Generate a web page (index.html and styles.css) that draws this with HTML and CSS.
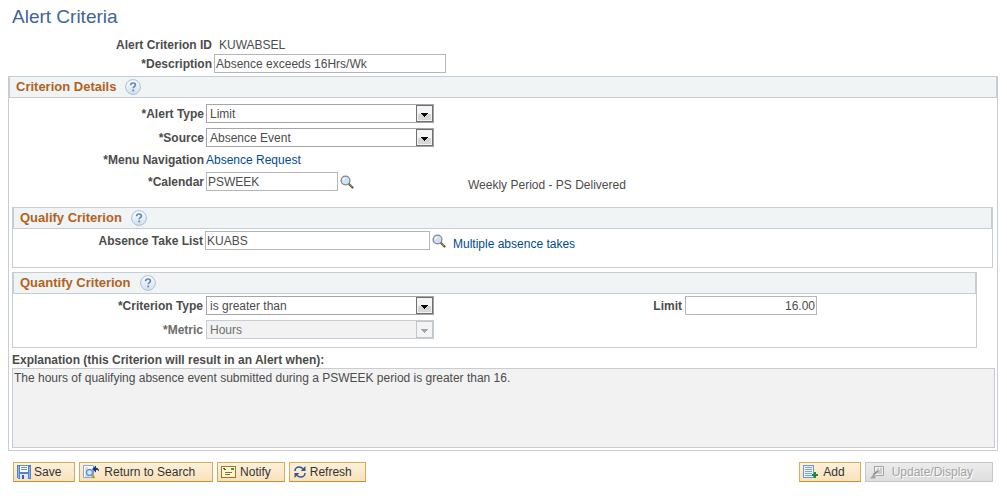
FILE: index.html
```
<!DOCTYPE html>
<html lang="en">
<head>
	<meta charset="utf-8">
	<title>Alert Criteria</title>
	<link rel="stylesheet" href="styles.css">
</head>
<body>

<!-- shared icons -->
<svg class="defs" aria-hidden="true">
	<defs>
		<linearGradient id="ball" x1="0" y1="0" x2="0" y2="1">
			<stop offset="0" stop-color="#ffffff"/>
			<stop offset="1" stop-color="#d3dfec"/>
		</linearGradient>
		<symbol id="help" viewBox="0 0 16 16">
			<circle cx="8" cy="8" r="7.4" fill="url(#ball)" stroke="#a9bfdb" stroke-width="1"/>
			<path d="M5.6 6.2C5.7 4.700 6.700 4 8 4c1.400 0 2.400.8 2.400 2 0 1.600-2.200 1.700-2.200 3.300" fill="none" stroke="#5b89bd" stroke-width="1.700"/>
			<rect x="7.300" y="10.500" width="1.800" height="1.800" fill="#5b89bd"/>
		</symbol>
		<symbol id="lookup" viewBox="0 0 14 14">
			<path d="M8.500 8.500l4 4" stroke="#5d5432" stroke-width="2.200" stroke-linecap="round"/>
			<path d="M9 8.600l3.400 3.400" stroke="#b5a04a" stroke-width="1"/>
			<circle cx="5.500" cy="5.500" r="4.400" fill="#cbe2f8" stroke="#85868d" stroke-width="1.300"/>
			<path d="M3.300 5.500a2.200 2.200 0 0 1 2.200-2.300" fill="none" stroke="#fff" stroke-width="1.300"/>
		</symbol>
		<symbol id="drop" viewBox="0 0 17 17">
			<rect x="0.500" y="0.500" width="16" height="16" fill="#f4f4f4" stroke="#707070"/>
			<path d="M2 9h13v6H2z" fill="#d6d6d6"/>
			<path d="M5 8h7v1h-1v1h-1v1H9v1H8v-1H7v-1H6V9H5z" fill="#000"/>
		</symbol>
		<symbol id="drop-off" viewBox="0 0 17 17">
			<rect x="0.500" y="0.500" width="16" height="16" fill="#f4f4f4" stroke="#c3c7cc"/>
			<path d="M5 8h7v1h-1v1h-1v1H9v1H8v-1H7v-1H6V9H5z" fill="#a0a4a8"/>
		</symbol>
	</defs>
</svg>

<h1>Alert Criteria</h1>

<form>
	<div class="row top">
		<span class="label">Alert Criterion ID</span>
		<span class="value">KUWABSEL</span>
	</div>
	<div class="row top">
		<label class="label" for="descr">*Description</label>
		<input class="w-descr" type="text" id="descr" value="Absence exceeds 16Hrs/Wk">
	</div>

	<section class="panel">
		<h2>Criterion Details <button type="button" class="icon" aria-label="Help"><svg width="16" height="16"><use href="#help"/></svg></button></h2>
		<div class="rows">
			<div class="row">
				<label class="label" for="type">*Alert Type</label>
				<span class="select"><select id="type"><option>Limit</option></select><svg width="17" height="17"><use href="#drop"/></svg></span>
			</div>
			<div class="row">
				<label class="label" for="source">*Source</label>
				<span class="select"><select id="source"><option>Absence Event</option></select><svg width="17" height="17"><use href="#drop"/></svg></span>
			</div>
			<div class="row short">
				<span class="label">*Menu Navigation</span>
				<a href="#">Absence Request</a>
			</div>
			<div class="row">
				<label class="label" for="calendar">*Calendar</label>
				<input class="w-short" type="text" id="calendar" value="PSWEEK">
				<button type="button" class="icon" aria-label="Look up Calendar"><svg width="14" height="14"><use href="#lookup"/></svg></button>
				<span class="note">Weekly Period - PS Delivered</span>
			</div>
		</div>

		<section class="panel inner">
			<h2>Qualify Criterion <button type="button" class="icon" aria-label="Help"><svg width="16" height="16"><use href="#help"/></svg></button></h2>
			<div class="rows qualify">
				<div class="row">
					<label class="label" for="takes">Absence Take List</label>
					<input class="w-long" type="text" id="takes" value="KUABS">
					<button type="button" class="icon" aria-label="Look up Absence Take List"><svg width="14" height="14"><use href="#lookup"/></svg></button>
					<a href="#" class="more">Multiple absence takes</a>
				</div>
			</div>
		</section>

		<section class="panel inner narrow">
			<h2>Quantify Criterion <button type="button" class="icon" aria-label="Help"><svg width="16" height="16"><use href="#help"/></svg></button></h2>
			<div class="rows quantify">
				<div class="row">
					<label class="label" for="ctype">*Criterion Type</label>
					<span class="select"><select id="ctype"><option>is greater than</option></select><svg width="17" height="17"><use href="#drop"/></svg></span>
					<label class="label limit" for="limit">Limit</label>
					<input class="w-short num" type="text" id="limit" value="16.00">
				</div>
				<div class="row off">
					<label class="label" for="metric">*Metric</label>
					<span class="select"><select id="metric" disabled><option>Hours</option></select><svg width="17" height="17"><use href="#drop-off"/></svg></span>
				</div>
			</div>
		</section>

		<div class="explain">
			<label for="explain">Explanation (this Criterion will result in an Alert when):</label>
			<textarea id="explain" readonly>The hours of qualifying absence event submitted during a PSWEEK period is greater than 16.</textarea>
		</div>
	</section>

	<div class="toolbar">
		<button type="button" class="btn save">
			<svg width="14" height="14" viewBox="0 0 14 14" shape-rendering="crispEdges">
				<path d="M0 0h14v14H1L0 13z" fill="#5581c8"/>
				<path d="M1 1h1v12H1zM12 2h1v11h-1z" fill="#8fb2e6"/>
				<path d="M3 0h8v7H3z" fill="#fff"/>
				<path d="M3 0h8v1H3zM4 2h6v1H4zM4 4h6v1H4z" fill="#6c8fc4"/>
				<path d="M3 9h8v5H3z" fill="#dfe9f7"/>
				<path d="M5 10h2v4H5z" fill="#3d5f9c"/>
			</svg>
			Save</button>
		<button type="button" class="btn return">
			<svg width="17" height="14" viewBox="0 0 17 14">
				<path d="M.5.500h10v12H.5z" fill="#fff" stroke="#88a7d8"/>
				<path d="M2 3h3M2 5h2M2 7h2M2 9h2M2 11h4" stroke="#a9bfe3"/>
				<path d="M8.500 10l3 3" stroke="#b3a22c" stroke-width="2.200"/>
				<circle cx="6.500" cy="7.500" r="3" fill="#d6e8fb" stroke="#6690cc" stroke-width="1.300"/>
				<path d="M9 4l4-3.500v2.300c2 .2 3 1.200 3 3.700-1-1.200-1.800-1.500-3-1.400v2.400z" fill="#1c3973"/>
			</svg>
			Return to Search</button>
		<button type="button" class="btn notify">
			<svg width="15" height="12" viewBox="0 0 15 12" shape-rendering="crispEdges">
				<path d="M0 0h15v12H0z" fill="#a5722e"/>
				<path d="M1 1h13v10H1z" fill="#fdf8d2"/>
				<path d="M2 2h2v1h1v1H3V3H2z" fill="#6b4a23"/>
				<path d="M10 2h3v2h-3z" fill="#2f9a3f"/>
				<path d="M4 6h7v1H4zM4 8h5v1H4z" fill="#8d7130"/>
			</svg>
			Notify</button>
		<button type="button" class="btn refresh">
			<svg width="12" height="12" viewBox="0 0 12 12">
				<path d="M1 5C1 2.500 3 1 5 1c1.600 0 3 .6 4 1.800M11 7c0 2.500-2 4-4 4-1.600 0-3-.6-4-1.800" fill="none" stroke="#2d5795" stroke-width="1.500"/>
				<path d="M11.500 0v5H6.700zM.5 12V7h4.800z" fill="#2d5795"/>
			</svg>
			Refresh</button>
		<button type="button" class="btn add">
			<svg width="15" height="14" viewBox="0 0 15 14" shape-rendering="crispEdges">
				<path d="M0 0h11v13H0z" fill="#6f95d5"/>
				<path d="M1 1h9v11H1z" fill="#e9f1fd"/>
				<path d="M2 2h7v1H2zM2 4h7v1H2zM2 6h7v1H2zM2 8h7v1H2zM2 10h7v1H2z" fill="#7fa3dc"/>
				<path d="M11 7h2v2h2v2h-2v2h-2v-2H9V9h2z" fill="#1f8a2b"/>
			</svg>
			Add</button>
		<button type="button" class="btn update" disabled>
			<svg width="14" height="13" viewBox="0 0 14 13">
				<path d="M4.500.500h9v9H6" fill="#f0f0f0" stroke="#a3a3a3"/>
				<path d="M4.500 0v6M7 3h2M10 3h2M7 5h5M8 7h4" stroke="#a3a3a3" fill="none"/>
				<path d="M8 5L3.500 8.500" stroke="#8e8e8e" stroke-width="2"/>
				<path d="M3.500 8L0 12.500h5.500V10z" fill="#a3a3a3"/>
			</svg>
			Update/Display</button>
	</div>
</form>

</body>
</html>
```
FILE: styles.css
```
body{
	margin: 0 9px 0 8px;
	background: #fff;
	color: #4c4c4c;
	font: 12px/16px "Liberation Sans", Arial, sans-serif;
}
.defs{
	position: absolute;
	width: 0;
	height: 0;
}
h1{
	margin: 0 4px;
	padding: 6px 0 7px;
	color: #426495;
	font-size: 19px;
	line-height: 22px;
	font-weight: normal;
}
h2{
	display: flex;
	align-items: center;
	gap: 9px;
	margin: 0;
	height: 20px;
	padding-left: 6px;
	background: #f0f4f5;
	border: 1px solid #c8ccd3;
	border-width: 0 1px 1px;
	color: #b3621d;
	font-size: 13px;
}
a{
	color: #004b91;
	text-decoration: none;
}
input, select, textarea{
	box-sizing: border-box;
	margin: 0;
	border: 1px solid #b4b6ba;
	border-radius: 0;
	background: #fff;
	color: #4c4c4c;
	font: inherit;
}
input{
	height: 19px;
	padding: 0 1px;
}
.icon{
	display: flex;
	padding: 0;
	border: none;
	background: none;
}

/* rows of fields */
.row{
	display: flex;
	align-items: center;
	gap: 2px;
	height: 19px;
}
.label, .explain label{
	font-weight: bold;
}
.label{
	width: 195px;
	text-align: right;
}
.top .label{
	width: 204px;
}
.value{
	padding-left: 5px;
}
.rows{
	display: flex;
	flex-direction: column;
	gap: 5px;
	padding: 6px 0 16px;
}
.short{
	height: 15px;
}
.note{
	margin: 6px 0 0 112px;
}
.w-descr{
	width: 232px;
}
.w-short{
	width: 132px;
}
.w-long{
	width: 225px;
}
.num{
	text-align: right;
}

.select{
	display: grid;
	width: 228px;
}
.select select, .select svg{
	grid-area: 1 / 1;
}
.select select{
	width: 100%;
	height: 19px;
	padding: 0 3px;
	appearance: none;
	border-color: #a5a6ad;
}
.select svg{
	justify-self: end;
	margin: 1px;
	pointer-events: none;
}
.off{
	color: #6e6e6e;
}
.select select:disabled{
	background: #f2f2f2;
	border-color: #c8ccd3;
	color: #6e6e6e;
	opacity: 1;
}

/* boxes */
.panel{
	margin-top: 3px;
	border: 1px solid #c8ccd3;
}
.inner{
	margin: 0 4px 4px 3px;
}
.narrow{
	margin-right: 20px;
}
.inner .label{
	width: 190px;
}
.inner .rows{
	padding-top: 2px;
}
.inner .qualify{
	padding-bottom: 17px;
}
.qualify .more{
	margin: 6px 0 0 5px;
}
.inner .quantify{
	padding-bottom: 8px;
}
.quantify .row{
	gap: 3px;
}
.inner .limit{
	width: 245px;
}
.explain{
	margin: 0 2px 2px 3px;
}
.explain textarea{
	display: block;
	width: 100%;
	height: 80px;
	padding: 1px;
	border-color: #c8ccd3;
	background: #f2f2f2;
	resize: none;
}

/* buttons */
.toolbar{
	display: flex;
	gap: 4px;
	margin: 11px 5px 0;
}
.btn{
	display: flex;
	align-items: center;
	gap: 4px;
	height: 20px;
	padding: 0 13px 0 3px;
	border: 1px solid #dcaa55;
	border-bottom-color: #c98f38;
	background: linear-gradient(#fdf0dc, #f9e2bb);
	color: #333;
	font: inherit;
}
.save{
	gap: 3px;
}
.return{
	padding-right: 17px;
}
.refresh{
	padding-left: 4px;
}
.add{
	gap: 5px;
	margin-left: auto;
	padding-right: 15px;
}
.update{
	gap: 8px;
	padding: 0 19px 0 4px;
	border-color: #c6c6c6;
	background: linear-gradient(#ececec, #dedede);
	color: #a3a3a3;
	text-shadow: 1px 1px #fff;
}
```
